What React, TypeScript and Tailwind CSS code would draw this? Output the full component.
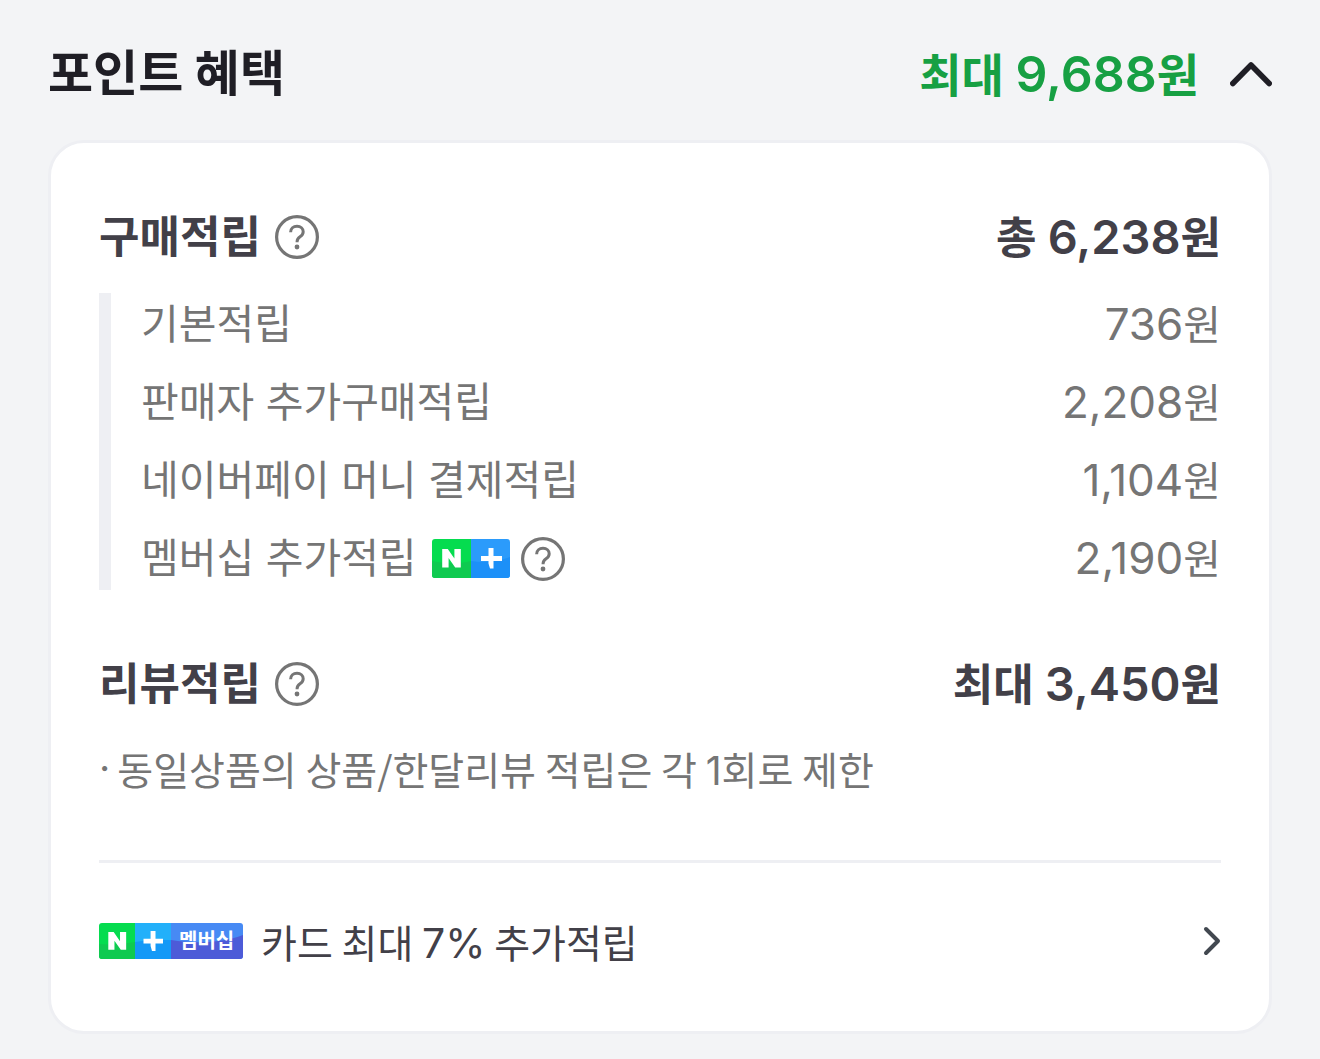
import { useState } from "react";
import type { ReactNode } from "react";

const earnings = [
  { label: "기본적립", amount: "736" },
  { label: "판매자 추가구매적립", amount: "2,208" },
  { label: "네이버페이 머니 결제적립", amount: "1,104" },
  { label: "멤버십 추가적립", amount: "2,190", membership: true },
];

const HelpButton = ({ label }: { label: string }) => (
  <button type="button" aria-label={label} className="shrink-0 cursor-pointer text-[#757575]">
    <svg className="size-11" viewBox="0 0 44 44" fill="none" stroke="currentColor" aria-hidden="true">
      <circle cx="22" cy="22" r="20.4" strokeWidth="3.2" />
      <path
        d="M15.6 17.2C15.7 13.6 18.3 11.3 22 11.3C25.7 11.3 28.2 13.5 28.2 16.7C28.2 19 27.1 20.4 25 21.8C22.9 23.2 22.1 24.3 22.1 26.6V27.2"
        strokeWidth="3"
      />
      <circle cx="22" cy="32" r="2.4" fill="currentColor" stroke="none" />
    </svg>
  </button>
);

const LetterN = () => (
  <path d="M12.4 28.5V10H18L24.6 19.6V10H31V28.5H25.4L18.8 18.9V28.5Z" fill="white" />
);

const NPlusBadge = () => (
  <svg className="w-[78px] h-[39px] shrink-0" viewBox="0 0 78 39" role="img" aria-label="네이버플러스">
    <defs>
      <clipPath id="badge-small">
        <rect width="78" height="39" rx="3" />
      </clipPath>
    </defs>
    <g clipPath="url(#badge-small)">
      <rect width="39" height="39" fill="#05dc4f" />
      <path d="M0 22C14 25 27 25 39 22V39H0Z" fill="#0fca50" />
      <rect x="39" width="39" height="39" fill="#2b9bfb" />
      <path d="M39 22C52 24 65 23 78 18V39H39Z" fill="#1c90f8" />
    </g>
    <g transform="translate(-2.2 0)">
      <LetterN />
    </g>
    <path d="M56.5 9H61.5V17H70V22H61.5V29.5H58L56.5 24.5V22H49V17H56.5Z" fill="white" />
  </svg>
);

const MembershipBadge = () => (
  <span className="relative flex w-36 h-9 shrink-0 items-center">
    <svg className="absolute inset-0 size-full" viewBox="0 0 144 36" aria-hidden="true">
      <defs>
        <clipPath id="badge-large">
          <rect width="144" height="36" rx="3" />
        </clipPath>
      </defs>
      <g clipPath="url(#badge-large)">
        <rect width="36" height="36" fill="#05dc4f" />
        <path d="M0 21C12 22 25 21 36 19V36H0Z" fill="#0fca50" />
        <rect x="36" width="36" height="36" fill="#22b0fa" />
        <path d="M36 19C48 17 60 17 72 17V36H36Z" fill="#1499f7" />
        <rect x="72" width="72" height="36" fill="#478af4" />
        <path d="M72 17C96 21 124 20 144 12V36H72Z" fill="#4d5bd8" />
      </g>
      <g transform="translate(-2.6 -.5) scale(.96)">
        <LetterN />
      </g>
      <path d="M51.6 8H56.5V15.8H64V20.6H56.5V28H53L51.6 23V20.6H44.5V15.8H51.6Z" fill="white" />
    </svg>
    <span className="relative ml-20 text-xl leading-9 font-bold text-white">멤버십</span>
  </span>
);

type SectionHeadingProps = {
  title: string;
  prefix: string;
  amount: string;
  children?: ReactNode;
};

const SectionHeading = ({ title, prefix, amount, children }: SectionHeadingProps) => (
  <div className="flex h-16 items-center justify-between">
    <div className="flex items-center gap-[14px]">
      <h3 className="text-[44px] leading-16 font-bold">{title}</h3>
      {children}
    </div>
    <strong className="text-[44px] leading-16 font-semibold">
      {prefix} <span className="text-[47px]">{amount}</span>원
    </strong>
  </div>
);

export default function App() {
  const [isOpen, setIsOpen] = useState(true);

  return (
    <main className="min-h-screen bg-[#f3f4f6] px-12 pb-6 text-[#424048] font-['Inter','Noto_Sans_CJK_KR',sans-serif]">
      <header className="flex h-[140px] items-center justify-between pt-2 text-[#1f1e25]">
        <h2 className="text-[49px] leading-16 font-bold">포인트 혜택</h2>
        <div className="flex items-center gap-[31px]">
          <strong className="text-[46px] leading-16 font-semibold text-[#17a043]">
            최대 <span className="text-[50px]">9,688</span>원
          </strong>
          <button
            type="button"
            aria-label="포인트 혜택 펼치기/접기"
            aria-expanded={isOpen}
            onClick={() => setIsOpen(!isOpen)}
            className="cursor-pointer"
          >
            <svg
              className={`w-[42px] h-[26px] ${isOpen ? "" : "rotate-180"}`}
              viewBox="0 0 42 26"
              fill="none"
              stroke="currentColor"
              strokeWidth="5.6"
              strokeLinecap="round"
              strokeLinejoin="round"
              aria-hidden="true"
            >
              <path d="M2.8 22.5L21 4L39.2 22.5" />
            </svg>
          </button>
        </div>
      </header>
      {isOpen && (
        <section className="rounded-[36px] border-[3px] border-[#eeeff3] bg-white px-12 pt-[62px] pb-[58px]">
          <SectionHeading title="구매적립" prefix="총" amount="6,238">
            <HelpButton label="구매적립 안내" />
          </SectionHeading>
          <ul className="mt-6 flex flex-col gap-[15px] border-l-12 border-[#eeeff3] pl-[30px] text-[#757575]">
            {earnings.map((item) => (
              <li key={item.label} className="flex h-[63px] items-center justify-between text-[41px] leading-[63px]">
                <div className="flex items-center">
                  <span>{item.label}</span>
                  {item.membership && (
                    <span className="ml-[15px] flex items-center gap-[11px]">
                      <NPlusBadge />
                      <HelpButton label="멤버십 추가적립 안내" />
                    </span>
                  )}
                </div>
                <span>
                  <span className="text-[44px]">{item.amount}</span>원
                </span>
              </li>
            ))}
          </ul>
          <div className="mt-[62px]">
            <SectionHeading title="리뷰적립" prefix="최대" amount="3,450">
              <HelpButton label="리뷰적립 안내" />
            </SectionHeading>
          </div>
          <p className="mt-5 flex h-16 gap-[7px] text-[39px] leading-16 text-[#757575]">
            <span>·</span>
            <span className="font-['Noto_Sans_CJK_KR',sans-serif]">
              동일상품의 상품/한달리뷰 적립은 각 <span className="font-['Inter',sans-serif] leading-none">1</span>회로 제한
            </span>
          </p>
          <hr className="mt-[60px] border-t-[3px] border-[#eeeff3]" />
          <a href="#card" className="mt-[46px] flex h-16 items-center justify-between">
            <span className="flex items-center gap-[18px]">
              <MembershipBadge />
              <span className="text-[39px] leading-16 font-['Noto_Sans_CJK_KR',sans-serif]">
                카드 최대 <span className="font-['Inter',sans-serif] text-[41px] leading-none">7%</span> 추가적립
              </span>
            </span>
            <svg
              className="w-[18px] h-[30px]"
              viewBox="0 0 18 30"
              fill="none"
              stroke="#424850"
              strokeWidth="4"
              strokeLinecap="round"
              strokeLinejoin="round"
              aria-hidden="true"
            >
              <path d="M3 3L15 15L3 27" />
            </svg>
          </a>
        </section>
      )}
    </main>
  );
}
